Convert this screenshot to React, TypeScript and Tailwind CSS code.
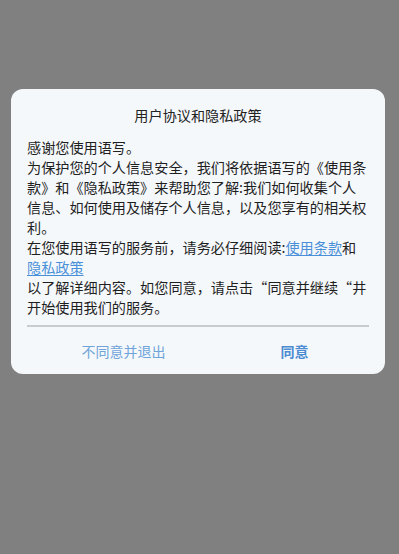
import React from 'react';

const font = { fontFamily: '"Noto Sans CJK SC", "Noto Sans", sans-serif' };

function Link({ children }: { children: React.ReactNode }) {
  return <span className="text-[#4a90d9] underline underline-offset-2">{children}</span>;
}

export default function App() {
  return (
    <div className="min-h-[554px] w-full bg-[#808080] pt-[89px]" style={font}>
      <div className="mx-[11px] w-[374px] rounded-[12px] bg-[#f5f8fb] pt-[16px]">
        <div className="text-center text-[14.15px] leading-[20px] text-[#222]">用户协议和隐私政策</div>

        <div className="mt-[12px] px-[16px] text-[14.15px] leading-[20px] text-[#1f1f1f] whitespace-nowrap">
          <div>感谢您使用语写。</div>
          <div>为保护您的个人信息安全，我们将依据语写的《使用条</div>
          <div>款》和《隐私政策》来帮助您了解:我们如何收集个人</div>
          <div>信息、如何使用及储存个人信息，以及您享有的相关权</div>
          <div>利。</div>
          <div>
            在您使用语写的服务前，请务必仔细阅读:<Link>使用条款</Link>和
          </div>
          <div>
            <Link>隐私政策</Link>
          </div>
          <div>以了解详细内容。如您同意，请点击“同意并继续“井</div>
          <div>开始使用我们的服务。</div>
        </div>

        <div className="mx-[16px] mt-[8px] h-[2px] bg-[#c9cccf]" />

        <div className="flex pl-[27px] pb-[13px] pt-[14px]">
          <button className="w-[171px] text-[14px] leading-[20px] text-[#6ea4da]">不同意并退出</button>
          <button className="w-[171px] text-[14px] leading-[20px] font-bold text-[#4a8bd1]">同意</button>
        </div>
      </div>
    </div>
  );
}
